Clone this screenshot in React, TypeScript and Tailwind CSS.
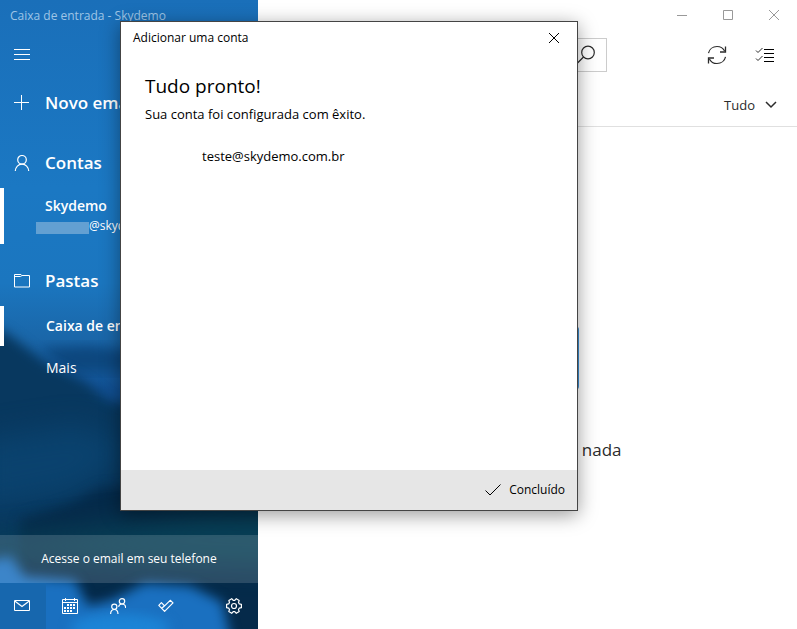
import { useState } from 'react';
import type { ReactNode } from 'react';

function Icon({ size = 16, children }: { size?: number; children: ReactNode }) {
  return (
    <svg
      width={size}
      height={size}
      viewBox={`0 0 ${size} ${size}`}
      fill="none"
      stroke="currentColor"
      className="shrink-0"
      aria-hidden="true"
    >
      {children}
    </svg>
  );
}

const MenuIcon = () => (
  <Icon>
    <path d="M0 2.5h16M0 7.5h16M0 12.5h16" />
  </Icon>
);

const PlusIcon = () => (
  <Icon>
    <path d="M0 7.5h15M7.5 0v15" />
  </Icon>
);

const PersonIcon = () => (
  <Icon>
    <circle cx="8" cy="4.8" r="4.3" strokeWidth="1.2" />
    <path d="M1.3 16c.2-4 3-6.9 6.7-6.9s6.5 2.9 6.7 6.9" strokeWidth="1.2" />
  </Icon>
);

const FolderIcon = () => (
  <Icon>
    <path d="M.5 1.5H7l1 1h7.5V14H.5zM.5 3.5h6L8 2.5" />
  </Icon>
);

const MailIcon = () => (
  <Icon>
    <path d="M.5 2.5h15v10H.5z" />
    <path d="M.7 3L8 8.500 15.3 3" strokeWidth="1.2" />
  </Icon>
);

const CalendarIcon = () => (
  <Icon>
    <path d="M.5 1.5h15v14H.5zM.5 4.5h15M3.5 0v3M12.5 0v3" />
    <path d="M5 7h8M2 10h11M2 13h8" strokeWidth="2" strokeDasharray="2 1" />
  </Icon>
);

const PeopleIcon = () => (
  <Icon>
    <circle cx="12" cy="3.3" r="2.7" strokeWidth="1.2" />
    <path d="M8.5 8.7C9.1 7 10.3 6 12 6c2.1 0 3.6 1.6 3.7 4" strokeWidth="1.2" />
    <circle cx="4.3" cy="8.8" r="2.6" strokeWidth="1.2" />
    <path d="M.6 16c.1-2.7 1.5-4.5 3.7-4.5S7.9 13.3 8 16" strokeWidth="1.2" />
  </Icon>
);

const ToDoIcon = () => (
  <Icon>
    <path
      d="M.8 7.3l2.6-2.6 3.2 3.2 5.6-5.6L15 4.9l-8.4 8.4zM3.8 10.2l2.8-2.5"
      strokeWidth="1.2"
      strokeLinejoin="round"
    />
  </Icon>
);

const GearIcon = () => (
  <Icon>
    <circle cx="8" cy="8" r="2.5" strokeWidth="1.2" />
    <path
      d="M15.4 6.3v3.4l-2.1.4-.8 1.4.7 2.1-2.9 1.7-1.5-1.7H7.2l-1.5 1.7-2.9-1.7.7-2.1-.8-1.4-2.1-.4V6.3l2.1-.4.8-1.4-.7-2.1L5.7.7l1.5 1.7h1.6L10.300.7l2.9 1.7-.7 2.1.8 1.4z"
      strokeWidth="1.2"
      strokeLinejoin="round"
    />
  </Icon>
);

const SearchIcon = () => (
  <Icon size={20}>
    <circle cx="12" cy="7.5" r="6.3" strokeWidth="1.2" />
    <path d="M7.5 12L.5 19" strokeWidth="1.2" />
  </Icon>
);

const SyncIcon = () => (
  <Icon size={20}>
    <path d="M1.5 8.2C2.3 4.2 5.8 1.5 10 1.5c3.3 0 6.2 1.7 7.6 4.6" strokeWidth="1.2" />
    <path d="M18.5 11.8c-.8 4-4.3 6.7-8.5 6.7-3.3 0-6.2-1.7-7.6-4.6" strokeWidth="1.2" />
    <path d="M18.5 1.5V7H13M1.5 18.5V13H7" strokeWidth="1.3" />
  </Icon>
);

const ChecklistIcon = () => (
  <Icon size={20}>
    <path d="M9 4.5h10M9 8.5h10M9 12.5h10M9 16.5h10" stroke="#000" />
    <path d="M1 5.5l2 2 4.500-4.500M1 13.500l2 2L7.500 11" />
  </Icon>
);

const CheckIcon = () => (
  <Icon>
    <path d="M.5 8.5L5 13 15.5 2.5" />
  </Icon>
);

const CloseIcon = () => (
  <Icon size={12}>
    <path d="M1 1l10 10M11 1L1 11" />
  </Icon>
);

// Blurred landscape behind the sidebar
function Wallpaper() {
  return (
    <svg
      className="absolute inset-0 size-full"
      viewBox="0 0 258 629"
      preserveAspectRatio="none"
      aria-hidden="true"
    >
      <defs>
        <linearGradient id="sky" x1="0" y1="0" x2="0" y2="1">
          <stop offset="0" stopColor="#1a6fb9" />
          <stop offset="0.3" stopColor="#1b78c3" />
          <stop offset="0.45" stopColor="#1b76bf" />
          <stop offset="0.54" stopColor="#1a66a8" />
          <stop offset="0.62" stopColor="#115093" />
        </linearGradient>
        <filter id="soft" x="-20%" y="-20%" width="140%" height="140%" colorInterpolationFilters="sRGB">
          <feGaussianBlur stdDeviation="6" />
        </filter>
        <filter id="softer" x="-50%" y="-50%" width="200%" height="200%" colorInterpolationFilters="sRGB">
          <feGaussianBlur stdDeviation="14" />
        </filter>
      </defs>
      <rect width="258" height="629" fill="url(#sky)" />
      <path d="M40 348L90 346 140 352v20L70 372z" fill="#0d477e" filter="url(#soft)" />
      <path d="M-30 318L5 332 45 362 85 382 110 402 280 410V660H-30z" fill="#08385f" filter="url(#soft)" />
      <path d="M-20 440L80 425 130 450 80 490-20 510z" fill="#0a426e" filter="url(#softer)" />
      <path d="M20 520L75 502 100 488 280 480V660H20z" fill="#052a4a" filter="url(#soft)" />
      <path d="M-30 542L110 526 200 514 290 510V568L170 566-30 556z" fill="#083f55" filter="url(#softer)" />
      <path d="M-30 566L10 556 24 576 75 580 88 606 112 600 145 583 190 586 222 602 236 660H-30z" fill="#1a70c0" filter="url(#soft)" />
      <ellipse cx="120" cy="628" rx="50" ry="14" fill="#1c84d6" filter="url(#soft)" />
    </svg>
  );
}

function SectionRow({ icon, label }: { icon: ReactNode; label: string }) {
  return (
    <button className="flex h-[50px] w-full items-center gap-[15px] pl-3.5 text-left text-[17px] font-semibold">
      {icon}
      {label}
    </button>
  );
}

const APPS = [
  { label: 'Email', icon: <MailIcon /> },
  { label: 'Calendário', icon: <CalendarIcon /> },
  { label: 'Pessoas', icon: <PeopleIcon /> },
  { label: 'Tarefas', icon: <ToDoIcon /> },
];

function Sidebar() {
  return (
    <aside className="relative isolate flex w-[258px] shrink-0 flex-col overflow-hidden text-white">
      <div className="absolute inset-0 -z-10">
        <Wallpaper />
      </div>
      <div className="flex h-8 items-center pl-2.5 text-xs text-[#9fc5e6]">
        Caixa de entrada - Skydemo
      </div>
      <button className="flex h-[46px] items-center pl-3.5" aria-label="Menu">
        <MenuIcon />
      </button>
      <SectionRow icon={<PlusIcon />} label="Novo email" />

      <nav className="mt-2.5">
        <SectionRow icon={<PersonIcon />} label="Contas" />
        <button className="flex h-14 w-full flex-col justify-center border-l-4 border-white text-left">
          <span className="pl-[41px] text-sm leading-5 font-semibold">Skydemo</span>
          <span className="flex items-center pl-8 text-xs leading-5">
            <span className="mt-1 h-3 w-[53px] bg-[#63a0d2]" />
            @skydemo.com.br
          </span>
        </button>
        <div className="mt-3">
          <SectionRow icon={<FolderIcon />} label="Pastas" />
        </div>
        <button className="flex h-10 w-full items-center border-l-4 border-white pl-[42px] text-sm font-semibold">
          Caixa de entrada
        </button>
        <button className="flex h-11 w-full items-center pl-[46px] text-sm">Mais</button>
      </nav>

      <button className="mt-auto flex h-12 items-center justify-center bg-white/15 text-xs">
        Acesse o email em seu telefone
      </button>
      <div className="flex h-[46px] items-center">
        {APPS.map((app, i) => (
          <button
            key={app.label}
            aria-label={app.label}
            className={
              i === 0
                ? 'flex h-full w-[46px] items-center bg-[#1767ae] pl-3.5'
                : 'flex h-full w-12 items-center justify-center'
            }
          >
            {app.icon}
          </button>
        ))}
        <button aria-label="Configurações" className="ml-auto flex h-full w-12 items-center justify-center">
          <GearIcon />
        </button>
      </div>
    </aside>
  );
}

function MainPanel() {
  return (
    <main className="flex min-w-0 flex-1 flex-col bg-white text-[#2b2b2b]">
      <div className="flex h-[30px] justify-end text-[#999]">
        <button aria-label="Minimizar" className="flex w-[46px] items-center justify-center">
          <Icon size={12}>
            <path d="M1 6.5h10" />
          </Icon>
        </button>
        <button aria-label="Maximizar" className="flex w-[46px] items-center justify-center">
          <Icon size={12}>
            <path d="M1.5 1.5h9v9h-9z" />
          </Icon>
        </button>
        <button aria-label="Fechar" className="flex w-[46px] items-center justify-center">
          <CloseIcon />
        </button>
      </div>

      <div className="flex h-[50px] items-center pr-2 pl-3">
        <div className="flex h-[34px] flex-1 items-center border border-[#ccc] pr-2.5">
          <input aria-label="Pesquisar" className="h-full min-w-0 flex-1 px-2 text-xs outline-none" />
          <button aria-label="Buscar">
            <SearchIcon />
          </button>
        </div>
        <button aria-label="Sincronizar" className="ml-[86px] flex w-12 justify-center">
          <SyncIcon />
        </button>
        <button aria-label="Modo de seleção" className="flex w-12 justify-center">
          <ChecklistIcon />
        </button>
      </div>

      <div className="flex h-[47px] items-center justify-end border-b border-[#e0e0e0] pt-1.5 pr-5">
        <button className="flex items-center gap-2.5 text-[13px]">
          Tudo
          <Icon size={12}>
            <path d="M1 2l5 5 5-5" strokeWidth="1.5" />
          </Icon>
        </button>
      </div>

      <div className="flex flex-1 flex-col items-center justify-center gap-12 pt-8">
        <div className="h-16 w-[103px] rounded-sm bg-[#3a8fd6]" />
        <p className="w-[188px] text-right text-[17px] leading-6">nada</p>
      </div>
    </main>
  );
}

function AccountDialog({ onClose }: { onClose: () => void }) {
  return (
    <div
      role="dialog"
      aria-labelledby="dialog-title"
      className="absolute top-[21px] left-[120px] flex h-[490px] w-[458px] flex-col border border-[#444] bg-white text-black shadow-[0_4px_18px_rgba(0,0,0,0.4)]"
    >
      <div className="flex h-8 items-center justify-between pr-[17px] pl-3 text-xs">
        <span id="dialog-title">Adicionar uma conta</span>
        <button aria-label="Fechar" onClick={onClose}>
          <CloseIcon />
        </button>
      </div>
      <div className="flex-1 px-6 pt-5">
        <h1 className="text-[19px] leading-6">Tudo pronto!</h1>
        <p className="mt-1.5 text-[13px] leading-5">Sua conta foi configurada com êxito.</p>
        <p className="mt-[22px] pl-[57px] text-[13px] leading-5">teste@skydemo.com.br</p>
      </div>
      <div className="flex h-10 justify-end bg-[#e6e6e6] pr-3">
        <button className="flex items-center gap-2 text-xs" onClick={onClose}>
          <CheckIcon />
          Concluído
        </button>
      </div>
    </div>
  );
}

export default function App() {
  const [open, setOpen] = useState(true);

  return (
    <div className="relative flex min-h-screen overflow-hidden font-['Open_Sans','Noto_Sans',sans-serif]">
      <Sidebar />
      <MainPanel />
      {open && <AccountDialog onClose={() => setOpen(false)} />}
    </div>
  );
}
